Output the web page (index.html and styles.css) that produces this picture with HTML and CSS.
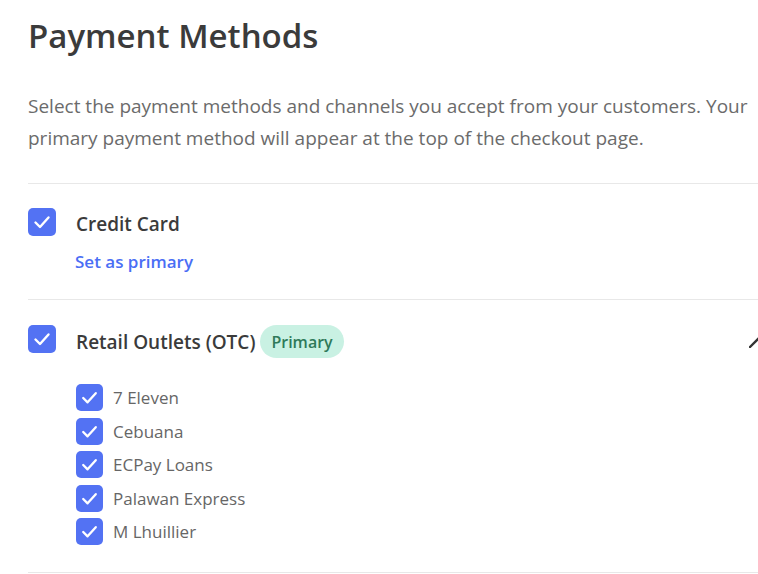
FILE: index.html
```html
<!DOCTYPE html>
<html lang="en">
<head>
    <meta charset="UTF-8">
    <meta name="viewport" content="width=device-width, initial-scale=1.0">
    <title>Payment Methods</title>
    <link rel="stylesheet" href="styles.css">
</head>
<body>
    <div class="page">
        <h1 class="title">Payment Methods</h1>
        <p class="intro">Select the payment methods and channels you accept from your customers. Your primary payment method will appear at the top of the checkout page.</p>

        <!-- Credit Card -->
        <div class="method">
            <div class="method-head compact">
                <span class="check">
                    <svg viewBox="0 0 28 28"><polyline points="7.5,14.5 12,19 20.5,9.5"/></svg>
                </span>
                <span class="method-name">Credit Card</span>
            </div>
            <a class="set-primary" href="#">Set as primary</a>
        </div>

        <!-- Retail Outlets -->
        <div class="method last">
            <div class="method-head">
                <span class="check">
                    <svg viewBox="0 0 28 28"><polyline points="7.5,14.5 12,19 20.5,9.5"/></svg>
                </span>
                <span class="method-name">Retail Outlets (OTC)</span>
                <span class="badge">Primary</span>
                <svg class="chevron" viewBox="0 0 20 12"><polyline points="1,11 10,2 19,11"/></svg>
            </div>
            <ul class="channels">
                <li><span class="check small"><svg viewBox="0 0 28 28"><polyline points="7.5,14.5 12,19 20.5,9.5"/></svg></span>7 Eleven</li>
                <li><span class="check small"><svg viewBox="0 0 28 28"><polyline points="7.5,14.5 12,19 20.5,9.5"/></svg></span>Cebuana</li>
                <li><span class="check small"><svg viewBox="0 0 28 28"><polyline points="7.5,14.5 12,19 20.5,9.5"/></svg></span>ECPay Loans</li>
                <li><span class="check small"><svg viewBox="0 0 28 28"><polyline points="7.5,14.5 12,19 20.5,9.5"/></svg></span>Palawan Express</li>
                <li><span class="check small"><svg viewBox="0 0 28 28"><polyline points="7.5,14.5 12,19 20.5,9.5"/></svg></span>M Lhuillier</li>
            </ul>
        </div>
    </div>
</body>
</html>
```

FILE: styles.css
```css
body {
    margin: 0;
    font-family: "Open Sans", "Liberation Sans", sans-serif;
    background-color: #fff;
    overflow: hidden;
}
.page {
    width: 741px;
    padding: 14px 0 0 28px;
}
.title {
    margin: 0;
    font-size: 33px;
    line-height: 44px;
    font-weight: 600;
    color: #3b3b3b;
}
.intro {
    margin: 32px 0 29px;
    font-size: 19px;
    line-height: 32px;
    color: #6b6b6b;
}
.method {
    border-top: 1px solid #e8e8e8;
    padding: 24px 0 25px;
}
.method.last {
    padding: 25px 0 27px;
    border-bottom: 1px solid #e8e8e8;
}
.method-head {
    display: flex;
    align-items: center;
    height: 33px;
}
.method-head.compact {
    height: 31px;
}
.check {
    flex: none;
    width: 28px;
    height: 28px;
    border-radius: 5px;
    background-color: #5372f3;
    display: flex;
    align-items: center;
    justify-content: center;
}
.method-head > .check {
    align-self: flex-start;
}
.check svg {
    width: 100%;
    height: 100%;
    fill: none;
    stroke: #fff;
    stroke-width: 2.4;
    stroke-linecap: round;
    stroke-linejoin: round;
}
.method-name {
    margin-left: 20px;
    font-size: 19px;
    font-weight: 600;
    color: #3b3b3b;
}
.badge {
    margin-left: 5px;
    height: 33px;
    padding: 0 11px;
    border-radius: 17px;
    background-color: #c9f1e3;
    color: #2f7a5a;
    font-size: 16px;
    font-weight: 600;
    display: flex;
    align-items: center;
}
.chevron {
    margin-left: auto;
    width: 20px;
    height: 12px;
    fill: none;
    stroke: #333;
    stroke-width: 2.4;
    stroke-linecap: round;
    stroke-linejoin: round;
}
.set-primary {
    display: block;
    margin: 11px 0 0 47px;
    font-size: 17px;
    line-height: 24px;
    font-weight: 600;
    color: #4a6ef5;
    text-decoration: none;
}
.channels {
    list-style: none;
    margin: 26px 0 0 48px;
    padding: 0;
    display: flex;
    flex-direction: column;
    gap: 6.5px;
}
.channels li {
    display: flex;
    align-items: center;
    gap: 10px;
    font-size: 17px;
    color: #666;
}
.check.small {
    width: 27px;
    height: 27px;
}
```
